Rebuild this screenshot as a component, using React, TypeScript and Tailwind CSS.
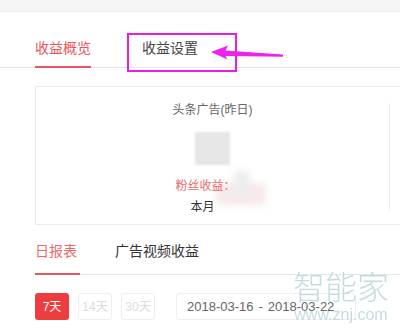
const font = "font-['Liberation_Sans','Noto_Sans_CJK_SC',sans-serif]";

function Blur({ className }: { className: string }) {
  return <div className={`absolute blur-[3px] ${className}`} />;
}

export default function App() {
  return (
    <div className={`relative h-[335px] w-[400px] overflow-hidden bg-white ${font}`}>
      <div className="h-[12px] border-b border-[#ececec] bg-[#f5f5f6]" />

      {/* top tabs */}
      <div className="flex border-b border-[#e6e6e6]">
        <div className="-mb-px ml-[35px] w-[56px] border-b-2 border-[#e9555a] pt-[27px] pb-[8px] text-center text-[14px] leading-[18px] whitespace-nowrap text-[#e9555a]">
          收益概览
        </div>
        <div className="ml-[51px] pt-[27px] pb-[10px] text-[14px] leading-[18px] whitespace-nowrap text-[#444]">
          收益设置
        </div>
      </div>

      {/* annotation */}
      <div className="absolute top-[33px] left-[127px] h-[39px] w-[110px] border-2 border-[#e81ee8]" />
      <svg className="absolute top-[40px] left-[205px]" width="85" height="25" viewBox="205 40 85 25">
        <polygon
          points="211,52 228,45.5 225.5,50.5 283,54.5 283,56.8 225.5,56 227.5,59.5"
          fill="#ee22ee"
        />
      </svg>

      {/* summary card */}
      <div className="mt-[18px] ml-[35px] flex h-[139px] w-[380px] border border-[#ececec]">
        <div className="relative flex w-[353px] flex-col items-center pt-[14px] text-[12px] leading-[18px]">
          <Blur className="top-[96px] left-[180px] h-[22px] w-[50px] bg-[#f7eaea]" />
          <Blur className="top-[84px] left-[198px] h-[26px] w-[16px] bg-[#ededed]" />
          <div className="relative text-[#666]">头条广告(昨日)</div>
          <div className="mt-[13px] h-[33px] w-[35px] bg-[#e6e6e6] blur-[1px]" />
          <div className="relative mt-[12px] pr-[14px] text-[#ea6a6a]">粉丝收益：</div>
          <div className="relative mt-[3px] pr-[20px] text-[#333]">本月</div>
        </div>
        <div className="mt-[16px] h-[108px] border-l border-[#eeeeee]" />
      </div>

      {/* report tabs */}
      <div className="ml-[35px] flex border-b border-[#e6e6e6]">
        <div className="-mb-px w-[45px] border-b-2 border-[#e9555a] pt-[17px] pb-[12px] text-[14px] leading-[18px] whitespace-nowrap text-[#ec6a6a]">
          日报表
        </div>
        <div className="ml-[35px] pt-[17px] pb-[14px] text-[14px] leading-[18px] whitespace-nowrap text-[#333]">
          广告视频收益
        </div>
      </div>

      {/* range buttons */}
      <div className="mt-[18px] ml-[35px] flex items-center">
        <div className="flex h-[27px] w-[34px] items-center justify-center rounded-[3px] bg-[#ee3d3f] text-[12px] text-white">
          7天
        </div>
        <div className="ml-[9px] flex h-[27px] w-[34px] items-center justify-center rounded-[3px] border border-[#eeeeee] text-[12px] text-[#dddddd]">
          14天
        </div>
        <div className="ml-[9px] flex h-[27px] w-[34px] items-center justify-center rounded-[3px] border border-[#eeeeee] text-[12px] text-[#dddddd]">
          30天
        </div>
        <div className="ml-[21px] flex h-[27px] w-[180px] items-center rounded-[3px] border border-[#eeeeee] pl-[10px] text-[13px] whitespace-nowrap text-[#666]">
          2018-03-16<span className="mx-[5px]">-</span>2018-03-22
        </div>
      </div>

      {/* watermark */}
      <div className="absolute top-[270px] left-[290px] flex w-[102px] flex-col items-center text-[#b8d8db] opacity-85">
        <div className="text-[32px] leading-[36px] font-light">智能家</div>
        <div className="text-[16px] leading-[18px]">www.znj.com</div>
      </div>
    </div>
  );
}
